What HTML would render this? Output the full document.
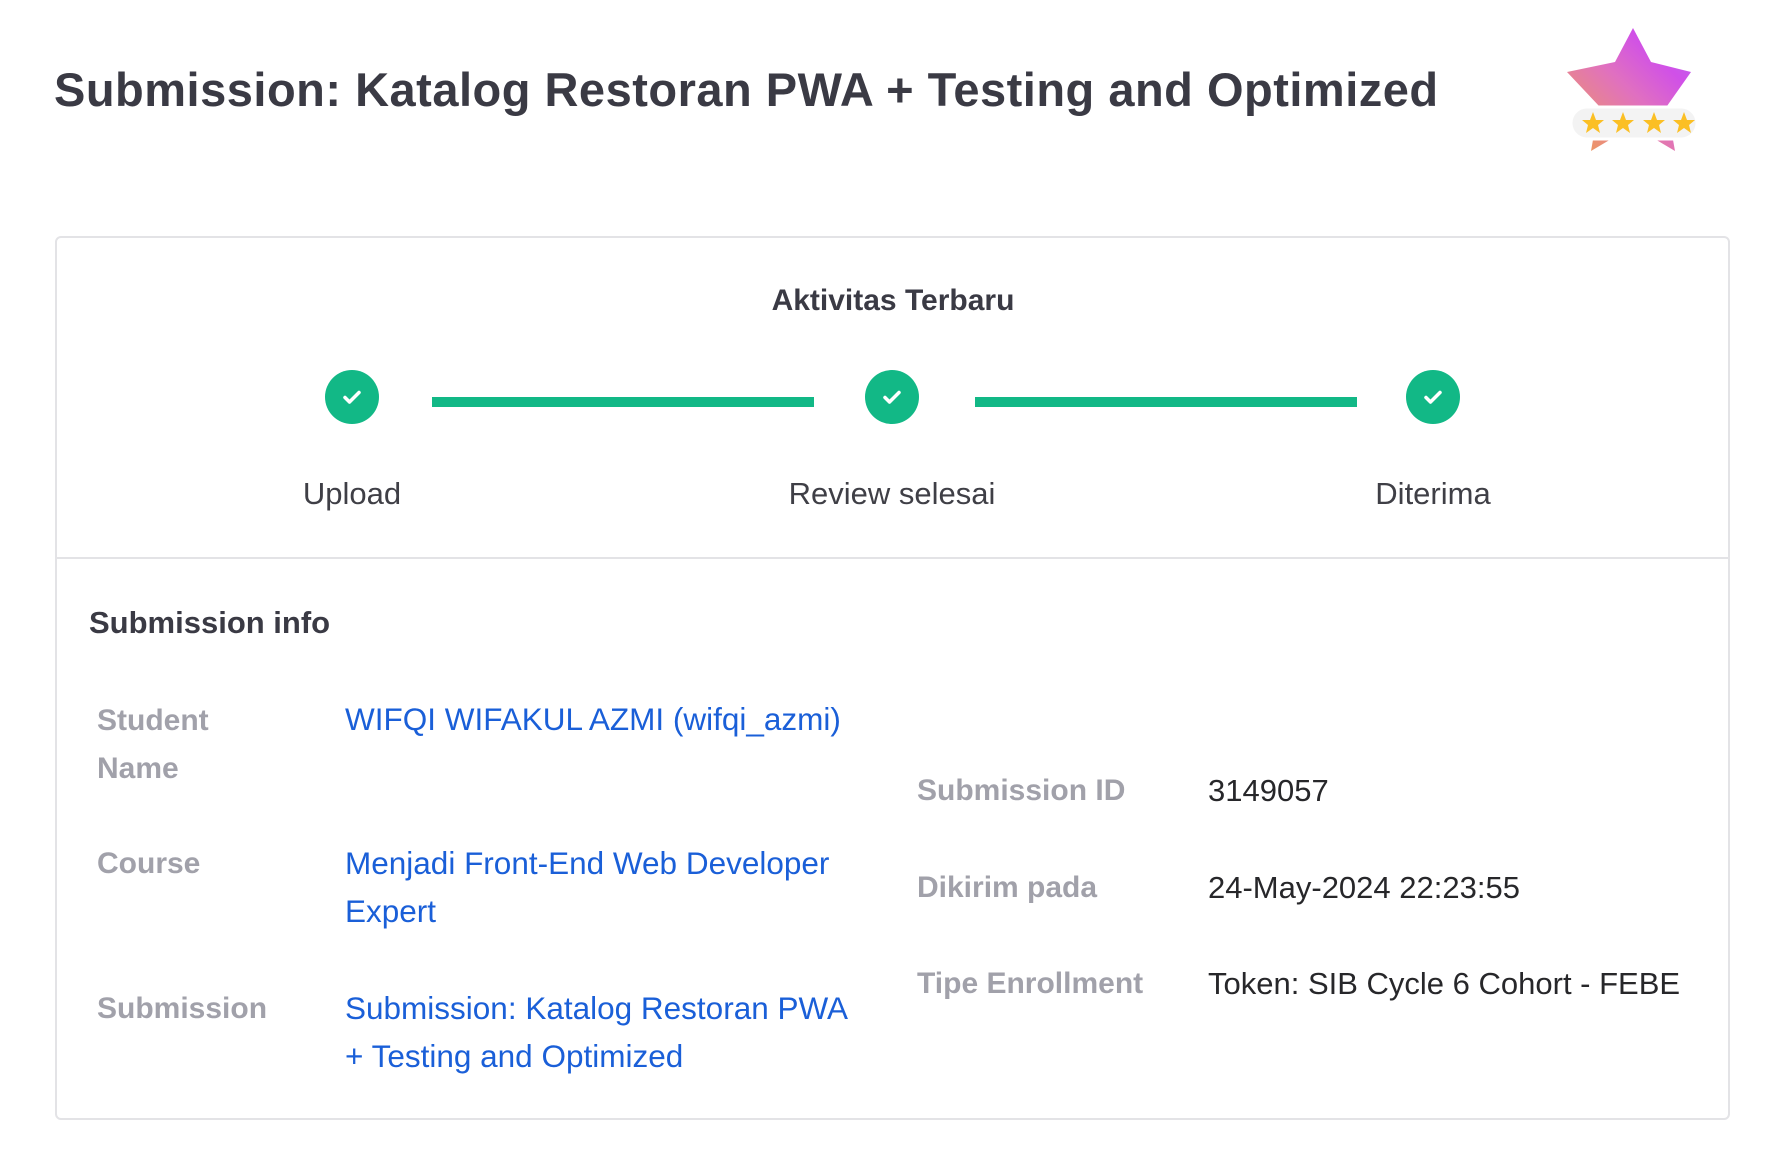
<!DOCTYPE html>
<html><head><meta charset="utf-8"><style>
*{margin:0;padding:0;box-sizing:border-box}
body{width:1776px;height:1153px;background:#fff;position:relative;font-family:"Liberation Sans",sans-serif;color:#3f3f46;overflow:hidden}
.a{position:absolute;white-space:nowrap}
h1{position:absolute;left:54px;top:62px;font-size:47px;font-weight:bold;color:#3a3a44;letter-spacing:0.5px}
.card{position:absolute;left:55px;top:236px;width:1675px;height:884px;border:2px solid #e3e3e6;border-radius:6px}
.div{position:absolute;left:55px;top:557px;width:1675px;height:2px;background:#e3e3e6}
.c{position:absolute;width:54px;height:54px;border-radius:50%;background:#12b886;top:370px}
.c svg{position:absolute;left:15px;top:15px}
.ln{position:absolute;top:397px;height:10px;background:#12b886}
.lbl{font-size:31px;color:#3f3f46}
.k{font-size:30px;font-weight:bold;color:#a1a1aa}
.v{font-size:31.5px;color:#1a5fd8;line-height:48px}
.t{font-size:31px;color:#27272a}
</style></head><body>
<h1>Submission: Katalog Restoran PWA + Testing and Optimized</h1>
<svg class="a" style="left:1563px;top:26px" width="140" height="130" viewBox="0 0 140 130">
<defs><linearGradient id="g" x1="0" y1="1" x2="1" y2="0"><stop offset="0" stop-color="#f0a050"/><stop offset="0.5" stop-color="#e070c0"/><stop offset="0.75" stop-color="#d050e8"/><stop offset="1" stop-color="#b070f0"/></linearGradient></defs>
<polygon points="70,2 88,36 128,46 104,80 112,125 70,100 28,125 36,80 4,46 52,36" fill="url(#g)" stroke-linejoin="round"/>
<rect x="8" y="81" width="126" height="32" rx="16" fill="#f3f3f3" stroke="#fff" stroke-width="3"/>
<g fill="#fbbf24">
<polygon points="30,86 33,94 41,94 35,99 37,107 30,102 23,107 25,99 19,94 27,94"/>
<polygon points="60,86 63,94 71,94 65,99 67,107 60,102 53,107 55,99 49,94 57,94"/>
<polygon points="91,86 94,94 102,94 96,99 98,107 91,102 84,107 86,99 80,94 88,94"/>
<polygon points="121,86 124,94 132,94 126,99 128,107 121,102 114,107 116,99 110,94 118,94"/>
</g></svg>
<div class="card"></div>
<div class="div"></div>
<div class="a" style="left:0;width:1786px;text-align:center;top:284px;font-size:30px;font-weight:bold;color:#3a3a44">Aktivitas Terbaru</div>
<div class="c" style="left:325px"><svg width="24" height="24" viewBox="0 0 24 24"><path d="M5 12.5l4.5 4.5L19 7.5" fill="none" stroke="#fff" stroke-width="3.5" stroke-linecap="round" stroke-linejoin="round"/></svg></div>
<div class="c" style="left:865px"><svg width="24" height="24" viewBox="0 0 24 24"><path d="M5 12.5l4.5 4.5L19 7.5" fill="none" stroke="#fff" stroke-width="3.5" stroke-linecap="round" stroke-linejoin="round"/></svg></div>
<div class="c" style="left:1406px"><svg width="24" height="24" viewBox="0 0 24 24"><path d="M5 12.5l4.5 4.5L19 7.5" fill="none" stroke="#fff" stroke-width="3.5" stroke-linecap="round" stroke-linejoin="round"/></svg></div>
<div class="ln" style="left:432px;width:382px"></div>
<div class="ln" style="left:975px;width:382px"></div>
<div class="a lbl" style="left:252px;width:200px;text-align:center;top:476px">Upload</div>
<div class="a lbl" style="left:742px;width:300px;text-align:center;top:476px">Review selesai</div>
<div class="a lbl" style="left:1283px;width:300px;text-align:center;top:476px">Diterima</div>
<div class="a" style="left:89px;top:605px;font-size:31px;font-weight:bold;color:#3a3a44">Submission info</div>
<div class="a k" style="left:97px;top:697px;line-height:48px">Student<br>Name</div>
<div class="a v" style="left:345px;top:695px">WIFQI WIFAKUL AZMI (wifqi_azmi)</div>
<div class="a k" style="left:97px;top:840px;line-height:48px">Course</div>
<div class="a v" style="left:345px;top:839px">Menjadi Front-End Web Developer<br>Expert</div>
<div class="a k" style="left:97px;top:985px;line-height:48px">Submission</div>
<div class="a v" style="left:345px;top:984px">Submission: Katalog Restoran PWA<br>+ Testing and Optimized</div>
<div class="a k" style="left:917px;top:774px">Submission ID</div>
<div class="a t" style="left:1208px;top:773px">3149057</div>
<div class="a k" style="left:917px;top:871px">Dikirim pada</div>
<div class="a t" style="left:1208px;top:870px">24-May-2024 22:23:55</div>
<div class="a k" style="left:917px;top:967px">Tipe Enrollment</div>
<div class="a t" style="left:1208px;top:966px">Token: SIB Cycle 6 Cohort - FEBE</div>
</body></html>
